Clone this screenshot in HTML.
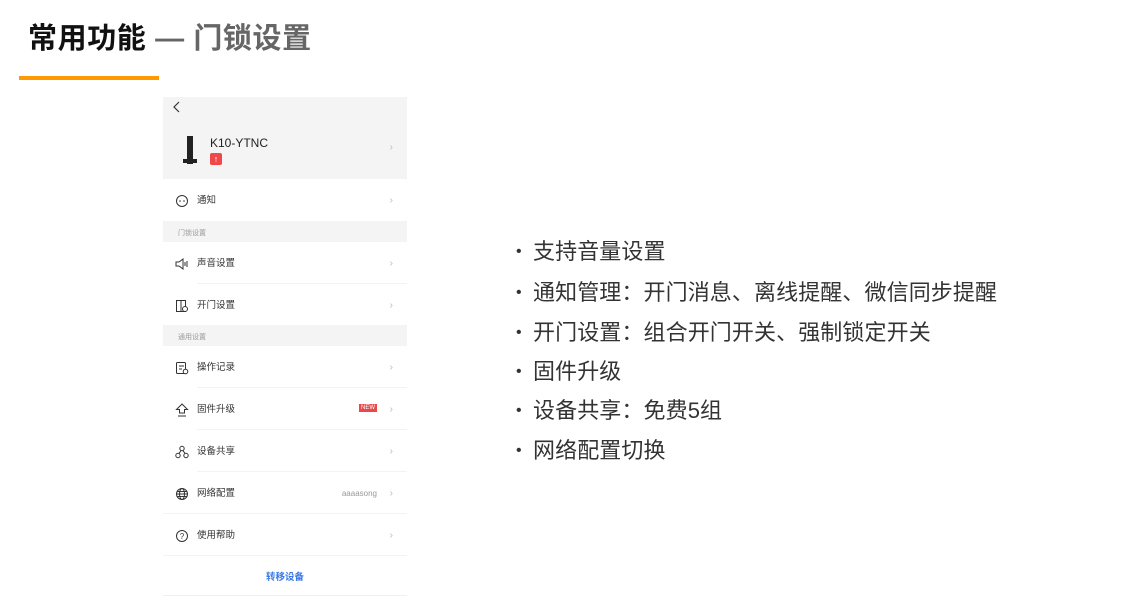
<!DOCTYPE html>
<html><head><meta charset="utf-8"><style>
*{margin:0;padding:0;box-sizing:border-box}
body{width:1121px;height:612px;background:#fff;position:relative;overflow:hidden;font-family:"Liberation Sans","Noto Sans CJK SC",sans-serif}
.t{position:absolute;left:28px;top:15px;font-size:29px;font-weight:bold;color:#111;white-space:nowrap;letter-spacing:0.6px}
.t span{color:#666}
.bar{position:absolute;left:19px;top:76px;width:140px;height:4px;background:#f90}
.p{position:absolute;left:163px;top:97px;width:244px;height:500px}
.hd{position:absolute;left:0;top:0;width:244px;height:82px;background:#f4f4f4}
.row{position:absolute;left:0;width:244px;height:42px;font-size:9.5px;color:#333}
.row .ic{position:absolute;left:12px;top:15px;width:14px;height:14px}
.row .lb{position:absolute;left:34px;top:15px;line-height:14px}
.row .ch{position:absolute;right:14px;top:15px;line-height:14px;color:#bbb;font-size:10px}
.row .ln{position:absolute;left:34px;right:0;bottom:0;height:1px;background:#f3f3f3}
.sec{position:absolute;left:0;width:244px;height:21px;background:#f4f4f4;font-size:7px;color:#999;padding:7px 0 0 15px}
.b{position:absolute;left:516px;font-size:22px;color:#333;line-height:30px;white-space:nowrap;letter-spacing:0.1px}
.b:before{content:"•";font-size:16px;position:absolute;left:0;top:0}
.b span{margin-left:17px}
</style></head><body>
<div class="t">常用功能 <span>— 门锁设置</span></div>
<div class="bar"></div>
<div class="p">
<div class="hd">
<svg style="position:absolute;left:9px;top:4px" width="10" height="12"><path d="M7 1L2 6l5 5" stroke="#333" stroke-width="1.2" fill="none"/></svg>
<div style="position:absolute;left:24px;top:39px;width:6px;height:28px;background:#222"></div>
<div style="position:absolute;left:20px;top:62px;width:14px;height:4px;background:#222"></div>
<div style="position:absolute;left:47px;top:39px;font-size:12px;color:#222">K10-YTNC</div>
<div style="position:absolute;left:47px;top:56px;width:12px;height:12px;background:#f04848;border-radius:2px;color:#fff;font-size:9px;text-align:center;line-height:12px">↑</div>
<div style="position:absolute;right:14px;top:45px;color:#bbb;font-size:10px">›</div>
</div>
<div class="row" style="top:82px"><svg class="ic" viewBox="0 0 14 14"><circle cx="7" cy="7" r="5.5" stroke="#333" fill="none"/><circle cx="5" cy="7" r=".8" fill="#333"/><circle cx="9" cy="7" r=".8" fill="#333"/></svg><div class="lb">通知</div><div class="ch">›</div></div>
<div class="sec" style="top:124px">门锁设置</div>
<div class="row" style="top:145px"><svg class="ic" viewBox="0 0 14 14"><path d="M1 5h3l4-3v10L4 9H1z M10 5v4 M12 4v6" stroke="#333" fill="none"/></svg><div class="lb">声音设置</div><div class="ch">›</div><div class="ln"></div></div>
<div class="row" style="top:187px"><svg class="ic" viewBox="0 0 14 14"><rect x="1.5" y="1.5" width="9" height="11" stroke="#333" fill="none"/><path d="M6 2v10" stroke="#333"/><circle cx="10" cy="10" r="2.5" fill="#fff" stroke="#333"/></svg><div class="lb">开门设置</div><div class="ch">›</div></div>
<div class="sec" style="top:228px">通用设置</div>
<div class="row" style="top:249px"><svg class="ic" viewBox="0 0 14 14"><rect x="1.5" y="1.5" width="9" height="11" rx="1" stroke="#333" fill="none"/><path d="M4 5h5M4 8h3" stroke="#333"/><circle cx="10.5" cy="10.5" r="2.3" fill="#fff" stroke="#333"/></svg><div class="lb">操作记录</div><div class="ch">›</div><div class="ln"></div></div>
<div class="row" style="top:291px"><svg class="ic" viewBox="0 0 14 14"><path d="M7 1L1.5 6.5H4.5V10h5V6.5h3z M3 13h8" stroke="#333" fill="none"/></svg><div class="lb">固件升级</div><div style="position:absolute;right:30px;top:16px;background:#e84a4a;color:#fff;font-size:6px;padding:1px 2px">NEW</div><div class="ch">›</div><div class="ln"></div></div>
<div class="row" style="top:333px"><svg class="ic" viewBox="0 0 14 14"><circle cx="7" cy="3.5" r="2.2" stroke="#333" fill="none"/><circle cx="3" cy="10.5" r="2.2" stroke="#333" fill="none"/><circle cx="11" cy="10.5" r="2.2" stroke="#333" fill="none"/><path d="M6 5.5L4 8.5M8 5.5l2 3" stroke="#333"/></svg><div class="lb">设备共享</div><div class="ch">›</div><div class="ln"></div></div>
<div class="row" style="top:375px"><svg class="ic" viewBox="0 0 14 14"><circle cx="7" cy="7" r="5.5" stroke="#333" fill="none"/><ellipse cx="7" cy="7" rx="2.5" ry="5.5" stroke="#333" fill="none"/><path d="M1.5 7h11M2.5 4.5h9M2.5 9.5h9" stroke="#333"/></svg><div class="lb">网络配置</div><div style="position:absolute;right:30px;top:15px;line-height:14px;color:#999;font-size:8px">aaaasong</div><div class="ch">›</div><div class="ln" style="left:0"></div></div>
<div class="row" style="top:417px"><svg class="ic" viewBox="0 0 14 14"><circle cx="7" cy="7" r="5.5" stroke="#333" fill="none"/><text x="7" y="10" font-size="8" text-anchor="middle" fill="#333" font-family="Liberation Sans">?</text></svg><div class="lb">使用帮助</div><div class="ch">›</div><div class="ln" style="left:0"></div></div>
<div style="position:absolute;left:0;width:244px;top:472px;text-align:center;font-size:9.5px;font-weight:bold;color:#3a78e6">转移设备</div>
<div style="position:absolute;left:0;width:244px;top:498px;height:1px;background:#f0f0f0"></div>
</div>
<div class="b" style="top:237px"><span>支持音量设置</span></div>
<div class="b" style="top:278px"><span>通知管理：开门消息、离线提醒、微信同步提醒</span></div>
<div class="b" style="top:318px"><span>开门设置：组合开门开关、强制锁定开关</span></div>
<div class="b" style="top:357px"><span>固件升级</span></div>
<div class="b" style="top:396px"><span>设备共享：免费5组</span></div>
<div class="b" style="top:436px"><span>网络配置切换</span></div>
</body></html>
